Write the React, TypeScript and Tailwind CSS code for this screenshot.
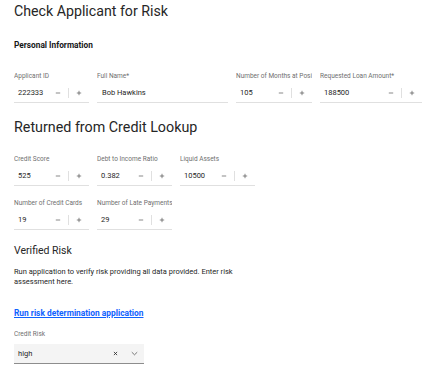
import React from "react";

const font = { fontFamily: "Roboto, 'Noto Sans', sans-serif" };

function Minus() {
  return (
    <svg width="6" height="6" viewBox="0 0 6 6">
      <line x1="0.8" y1="3" x2="5.2" y2="3" stroke="#393939" strokeWidth="0.6" />
    </svg>
  );
}
function Plus() {
  return (
    <svg width="6" height="6" viewBox="0 0 6 6">
      <line x1="0.8" y1="3" x2="5.2" y2="3" stroke="#393939" strokeWidth="0.6" />
      <line x1="3" y1="0.8" x2="3" y2="5.2" stroke="#393939" strokeWidth="0.6" />
    </svg>
  );
}

function Label({ children }: { children: React.ReactNode }) {
  return (
    <div className="text-[6.5px] leading-[8px] text-[#6f6f6f] whitespace-nowrap overflow-hidden">
      {children}
    </div>
  );
}

function NumberField({ label, value, w }: { label: string; value: string; w: string }) {
  return (
    <div className={`${w} flex flex-col`}>
      <Label>{label}</Label>
      <div className="mt-[3px] h-[20px] flex items-center border-b border-[#e0e0e0] bg-white">
        <div className="flex-1 pl-[4px] text-[7.5px] text-[#262626]">{value}</div>
        <div className="w-[20px] h-full flex items-center justify-center">
          <Minus />
        </div>
        <div className="w-px h-[10px] bg-[#e0e0e0]" />
        <div className="w-[20px] h-full flex items-center justify-center">
          <Plus />
        </div>
      </div>
    </div>
  );
}

function TextField({ label, value, w }: { label: string; value: string; w: string }) {
  return (
    <div className={`${w} flex flex-col`}>
      <Label>{label}</Label>
      <div className="mt-[3px] h-[20px] flex items-center border-b border-[#e0e0e0] bg-white">
        <div className="pl-[5px] text-[7.5px] text-[#262626]">{value}</div>
      </div>
    </div>
  );
}

export default function App() {
  return (
    <div className="w-[435px] h-[373px] bg-white overflow-hidden pl-[14px]" style={font}>
      <div className="text-[14.2px] leading-[22px] text-[#262626]">Check Applicant for Risk</div>
      <div className="mt-[18px] text-[8.3px] leading-[10px] font-bold text-[#161616]">Personal Information</div>

      <div className="mt-[22px] flex gap-[8px]">
        <NumberField label="Applicant ID" value="222333" w="w-[75px]" />
        <TextField label="Full Name*" value="Bob Hawkins" w="w-[131px]" />
        <NumberField label="Number of Months at Posi" value="105" w="w-[76px]" />
        <NumberField label="Requested Loan Amount*" value="188500" w="w-[102px]" />
      </div>

      <div className="mt-[13px] text-[14.3px] leading-[22px] text-[#262626]">Returned from Credit Lookup</div>

      <div className="mt-[17px] flex gap-[8px]">
        <NumberField label="Credit Score" value="525" w="w-[75px]" />
        <NumberField label="Debt to Income Ratio" value="0.382" w="w-[75px]" />
        <NumberField label="Liquid Assets" value="10500" w="w-[75px]" />
      </div>

      <div className="mt-[13px] flex gap-[8px]">
        <NumberField label="Number of Credit Cards" value="19" w="w-[75px]" />
        <NumberField label="Number of Late Payments" value="29" w="w-[75px]" />
      </div>

      <div className="mt-[13px] text-[10.5px] leading-[16px] text-[#262626]">Verified Risk</div>
      <div className="mt-[8px] w-[222px] text-[7.5px] leading-[10px] text-[#262626]">
        Run application to verify risk providing all data provided. Enter risk assessment here.
      </div>

      <div className="mt-[21px] text-[8.4px] leading-[10px] font-bold text-[#0f62fe] underline">
        Run risk determination application
      </div>

      <div className="mt-[12px]">
        <Label>Credit Risk</Label>
      </div>
      <div className="mt-[6px] w-[130px] h-[20px] bg-[#f4f4f4] border-b border-[#8d8d8d] flex items-center">
        <div className="flex-1 pl-[4px] text-[7.5px] text-[#262626]">high</div>
        <div className="w-[18px] flex items-center justify-center">
          <svg width="5" height="5" viewBox="0 0 5 5">
            <line x1="0.9" y1="0.9" x2="4.1" y2="4.1" stroke="#262626" strokeWidth="0.8" />
            <line x1="4.1" y1="0.9" x2="0.9" y2="4.1" stroke="#262626" strokeWidth="0.8" />
          </svg>
        </div>
        <div className="w-[20px] flex items-center justify-center">
          <svg width="7" height="5" viewBox="0 0 7 5">
            <polyline points="0.8,1.2 3.5,3.8 6.2,1.2" fill="none" stroke="#262626" strokeWidth="0.6" />
          </svg>
        </div>
      </div>
    </div>
  );
}
